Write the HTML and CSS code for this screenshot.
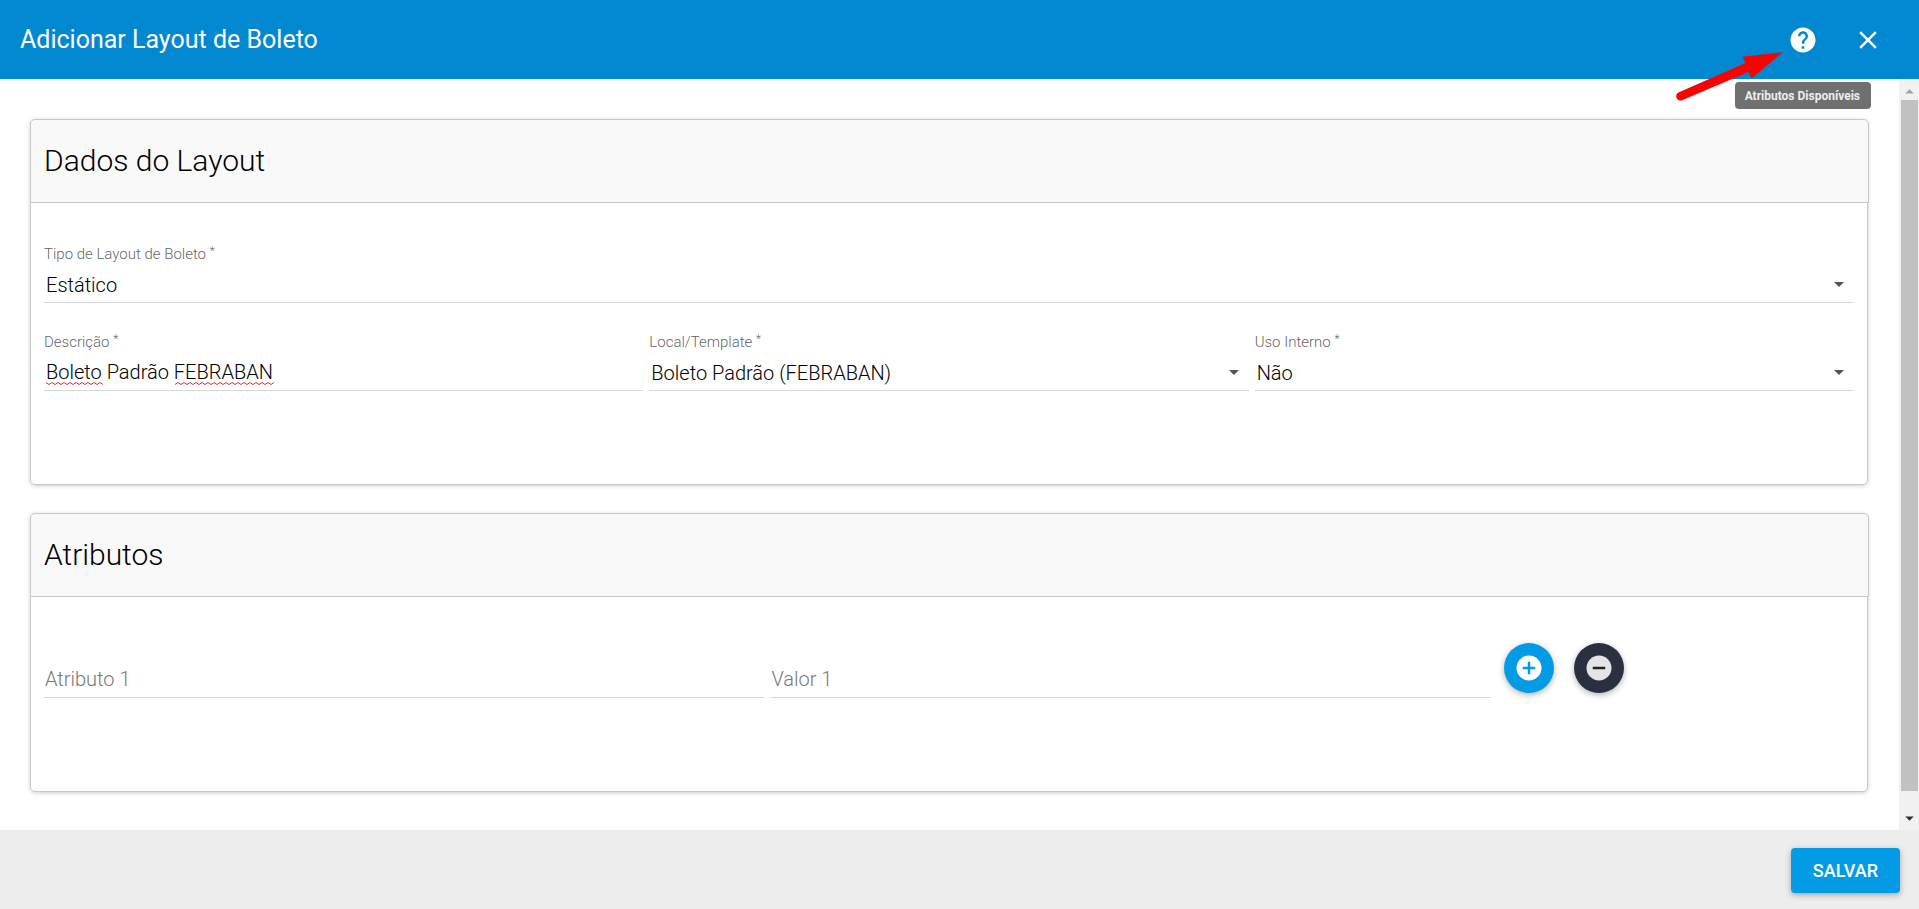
FILE: index.html
```html
<!DOCTYPE html>
<html lang="pt-BR">
<head>
<meta charset="utf-8">
<title>Adicionar Layout de Boleto</title>
<link rel="stylesheet" href="styles.css">
</head>
<body>
<div class="dialog">
  <header class="toolbar">
    <h1 class="toolbar-title">Adicionar Layout de Boleto</h1>
    <button class="icon-button" type="button" aria-label="Ajuda" aria-describedby="help-tip">
      <svg class="icon" viewBox="0 0 24 24" aria-hidden="true"><path d="M12 2C6.48 2 2 6.48 2 12s4.48 10 10 10 10-4.48 10-10S17.52 2 12 2zm1 17h-2v-2h2v2zm2.07-7.75l-.9.92C13.45 12.9 13 13.5 13 15h-2v-.5c0-1.100.45-2.100 1.170-2.830l1.240-1.260c.37-.36.59-.86.59-1.410 0-1.100-.9-2-2-2s-2 .9-2 2H8c0-2.210 1.790-4 4-4s4 1.790 4 4c0 .88-.36 1.680-.93 2.250z"/></svg>
    </button>
    <button class="icon-button" type="button" aria-label="Fechar">
      <svg class="icon" viewBox="0 0 24 24" aria-hidden="true"><path d="M19 6.410L17.590 5 12 10.590 6.410 5 5 6.410 10.590 12 5 17.590 6.410 19 12 13.410 17.590 19 19 17.590 13.410 12z"/></svg>
    </button>
    <svg class="pointer-arrow" viewBox="0 0 108 52" aria-hidden="true"><path d="M106.700 2.300L66.300 6.700l3.200 6.300L3 42.300a4.200 4.200 0 0 0 3 8L72.500 22l3.200 6.500z"/></svg>
    <div class="tooltip" id="help-tip" role="tooltip">Atributos Disponíveis</div>
  </header>

  <div class="scroll-area">
    <main class="content">
      <section class="card">
        <h2 class="card-header">Dados do Layout</h2>
        <div class="card-body card-body-data">
          <div class="field">
            <label class="field-label" for="tipo">Tipo de Layout de Boleto <span class="required">*</span></label>
            <div class="control">
              <select class="input" id="tipo"><option>Estático</option></select>
              <svg class="caret" viewBox="0 0 10 5" aria-hidden="true"><path d="M0 0h10L5 5z"/></svg>
            </div>
          </div>
          <div class="row-thirds">
            <div class="field">
              <label class="field-label" for="descricao">Descrição <span class="required">*</span></label>
              <div class="control">
                <input class="input" id="descricao" type="text" value="Boleto Padrão FEBRABAN">
                <svg class="spelling" viewBox="0 0 232 5" aria-hidden="true">
                  <defs><pattern id="wave" width="6" height="5" patternUnits="userSpaceOnUse"><path d="M-3 3.500L0 1.500 3 3.500 6 1.500 9 3.500"/></pattern></defs>
                  <rect class="spelling-mark" width="57" height="5" fill="url(#wave)"/>
                  <rect class="spelling-mark" x="129" width="99" height="5" fill="url(#wave)"/>
                </svg>
              </div>
            </div>
            <div class="field">
              <label class="field-label" for="local">Local/Template <span class="required">*</span></label>
              <div class="control">
                <select class="input" id="local"><option>Boleto Padrão (FEBRABAN)</option></select>
                <svg class="caret" viewBox="0 0 10 5" aria-hidden="true"><path d="M0 0h10L5 5z"/></svg>
              </div>
            </div>
            <div class="field">
              <label class="field-label" for="uso">Uso Interno <span class="required">*</span></label>
              <div class="control">
                <select class="input" id="uso"><option>Não</option></select>
                <svg class="caret" viewBox="0 0 10 5" aria-hidden="true"><path d="M0 0h10L5 5z"/></svg>
              </div>
            </div>
          </div>
        </div>
      </section>

      <section class="card">
        <h2 class="card-header">Atributos</h2>
        <div class="card-body card-body-attributes">
          <div class="row-attributes">
            <div class="control field"><input class="input" type="text" placeholder="Atributo 1" aria-label="Atributo 1"></div>
            <div class="control field"><input class="input" type="text" placeholder="Valor 1" aria-label="Valor 1"></div>
            <div class="actions">
              <button class="fab fab-add" type="button" aria-label="Adicionar atributo">
                <svg class="icon" viewBox="0 0 24 24" aria-hidden="true"><circle cx="12" cy="12" r="10"/><path d="M7 12h10M12 7v10"/></svg>
              </button>
              <button class="fab fab-remove" type="button" aria-label="Remover atributo">
                <svg class="icon" viewBox="0 0 24 24" aria-hidden="true"><circle cx="12" cy="12" r="10"/><path d="M7 12h10"/></svg>
              </button>
            </div>
          </div>
        </div>
      </section>
    </main>
    <div class="scrollbar" aria-hidden="true">
      <svg class="scroll-step scroll-step-off" viewBox="0 0 20 20"><path d="M5 14h10l-5-5z"/></svg>
      <div class="scroll-thumb"></div>
      <svg class="scroll-step" viewBox="0 0 20 20"><path d="M5 6h10l-5 5z"/></svg>
    </div>
  </div>

  <footer class="footer">
    <button class="save-button" type="submit">SALVAR</button>
  </footer>
</div>
</body>
</html>
```
FILE: styles.css
```css
* { box-sizing: border-box; }

body {
  margin: 0;
  background: #fff;
  color: #000;
  font-family: Roboto, "Noto Sans", sans-serif;
  font-size: 20px;
}

button, input, select { font: inherit; color: inherit; }

.dialog {
  display: flex;
  flex-direction: column;
  height: 100vh;
}

/* Top bar */
.toolbar {
  position: relative;
  z-index: 1;
  display: flex;
  align-items: center;
  gap: 15px;
  height: 79px;
  padding: 0 26px 0 20px;
  background: #0288d1;
  color: #fff;
}

.toolbar-title {
  flex: 1;
  margin: 0;
  font-size: 25px;
  font-weight: 400;
}

.icon-button {
  display: grid;
  place-items: center;
  width: 50px;
  height: 50px;
  padding: 0;
  border: 0;
  background: none;
}

.icon {
  width: 30px;
  height: 30px;
  fill: currentColor;
}

.pointer-arrow {
  position: absolute;
  top: 50px;
  right: 135px;
  width: 108px;
  height: 52px;
  fill: #f00;
}

.tooltip {
  position: absolute;
  top: 82px;
  right: 48px;
  padding: 1px 11px 0 10px;
  border-radius: 4px;
  background: #707070;
  color: #eee;
  font-size: 12px;
  font-weight: 700;
  line-height: 26px;
}

/* Scrolling body */
.scroll-area {
  display: flex;
  flex: 1;
  min-height: 0;
}

.content {
  display: flex;
  flex: 1;
  flex-direction: column;
  gap: 28px;
  min-width: 0;
  padding: 40px 31px 38px 30px;
  overflow: hidden;
}

.scrollbar {
  display: flex;
  flex-direction: column;
  width: 20px;
  padding: 1px 1px 0 2px;
  background: #f1f1f1;
}

.scroll-step {
  width: 17px;
  height: 20px;
  fill: #333;
}

.scroll-step-off { fill: #a3a3a3; }

.scroll-thumb {
  flex: 1;
  margin-bottom: 19px;
  background: #c1c1c1;
}

/* Cards */
.card {
  border: 1px solid #c8c8c8;
  border-radius: 5px;
  box-shadow: 0 1px 4px rgba(0, 0, 0, 0.2);
}

.card-header {
  margin: -1px -2px 0 -1px;
  padding: 0 13px;
  border: 1px solid #c8c8c8;
  border-radius: 5px 5px 0 0;
  background: #f9f9f9;
  font-size: 30px;
  font-weight: 300;
  line-height: 82px;
}

.card-body { padding: 0 10px; }
.card-body-data { padding-top: 40px; padding-bottom: 93px; }
.card-body-attributes { padding-top: 46px; padding-bottom: 93px; }

.field { margin: 0 3px; }

.row-thirds {
  display: grid;
  grid-template-columns: repeat(3, 1fr);
  margin-top: 28px;
}

.row-attributes {
  display: grid;
  grid-template-columns: 2fr 2fr 1fr;
  align-items: end;
}

.field-label {
  display: block;
  color: rgba(0, 0, 0, 0.65);
  font-size: 15px;
  font-weight: 300;
  line-height: 22px;
}

.required {
  font-size: 12px;
  vertical-align: top;
  line-height: 16px;
}

.control { position: relative; }

.input {
  display: block;
  width: 100%;
  height: 38px;
  padding: 1px 2px 0;
  border: 0;
  border-bottom: 1px solid #d8d8d8;
  border-radius: 0;
  outline: 0;
  appearance: none;
  background: transparent;
  font-weight: 300;
}

select.input { padding-top: 3px; }

.input:placeholder-shown { padding: 0 1px; }

.input::placeholder { color: #777; opacity: 1; }

.caret {
  position: absolute;
  top: 17px;
  right: 10px;
  width: 10px;
  height: 5px;
  fill: #555;
  pointer-events: none;
}

.spelling {
  position: absolute;
  bottom: 5px;
  left: 2px;
  width: 232px;
  height: 5px;
  fill: none;
  stroke: #e0303a;
  pointer-events: none;
}

.spelling-mark { stroke: none; }

/* Attribute buttons */
.actions {
  display: flex;
  gap: 20px;
  padding: 0 0 5px 10px;
}

.fab {
  display: grid;
  place-items: center;
  width: 50px;
  height: 50px;
  padding: 0;
  border: 0;
  border-radius: 50%;
  box-shadow: 0 2px 6px rgba(0, 0, 0, 0.3);
}

.fab-add { background: #039be5; color: #fff; }
.fab-add path { stroke: #039be5; stroke-width: 2; }
.fab-remove { background: #2b3040; color: #e4e4e6; }
.fab-remove path { stroke: #222; stroke-width: 2; }

/* Bottom bar */
.footer {
  display: flex;
  align-items: center;
  justify-content: flex-end;
  height: 79px;
  padding: 2px 19px 0;
  background: #ededed;
}

.save-button {
  height: 45px;
  padding: 0 22px;
  border: 0;
  border-radius: 4px;
  background: #039be5;
  box-shadow: 0 2px 6px rgba(0, 0, 0, 0.3);
  color: #fff;
  font-size: 18px;
  font-weight: 500;
}
```
